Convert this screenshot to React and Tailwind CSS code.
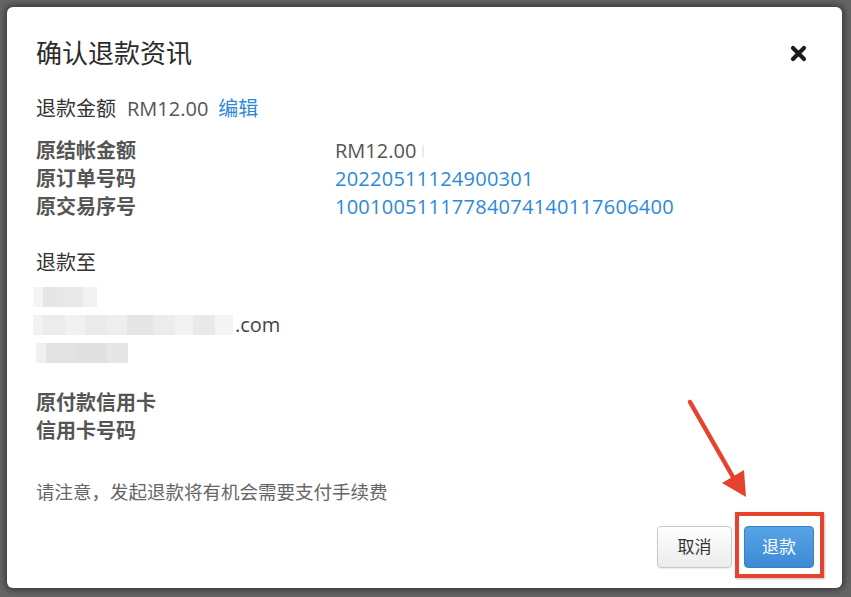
import React from "react";

const font = { fontFamily: '"Open Sans", "Noto Sans CJK SC", "Noto Sans", sans-serif' };

function Blur({ blocks, className = "" }) {
  return (
    <div className={"flex h-[20px] " + className}>
      {blocks.map(([w, c], i) => (
        <div key={i} style={{ width: w, background: c }} className="h-full" />
      ))}
    </div>
  );
}

export default function App() {
  return (
    <div
      className="relative w-[851px] h-[597px] overflow-hidden bg-[#646464] pt-[7px] pl-[7px]"
      style={font}
    >
      <div className="relative w-[835px] h-[581px] bg-white rounded-[6px] shadow-[0_0_6px_2px_rgba(0,0,0,0.45)] pl-[29px] pr-[36px] pt-[28px] flex flex-col">
        {/* Title */}
        <div className="flex items-center justify-between h-[36px]">
          <div className="text-[26px] leading-[36px] text-[#2b2b2b]">确认退款资讯</div>
          <svg width="17" height="17" viewBox="0 0 17 17" className="mr-[-1px]">
            <path d="M3 3 L14 14 M14 3 L3 14" stroke="#1c1c1c" strokeWidth="4.2" strokeLinecap="round" />
          </svg>
        </div>

        {/* Refund amount */}
        <div className="mt-[24px] flex items-center h-[28px] text-[20px] leading-[28px]">
          <span className="text-[#333]">退款金额</span>
          <span className="ml-[11px] text-[#555]">RM12.00</span>
          <span className="ml-[10px] text-[#2d89d9]">编辑</span>
        </div>

        {/* Details table */}
        <div className="mt-[14px] flex flex-col text-[20px] leading-[28px]">
          <div className="flex h-[28px]">
            <span className="w-[299px] text-[#555] font-semibold">原结帐金额</span>
            <span className="text-[#555] flex items-center">
              RM12.00
              <span className="ml-[6px] inline-block w-[2px] h-[12px] bg-[#ececec]" />
            </span>
          </div>
          <div className="flex h-[28px]">
            <span className="w-[299px] text-[#555] font-semibold">原订单号码</span>
            <span className="text-[#2d89d9] tracking-[0.25px]">20220511124900301</span>
          </div>
          <div className="flex h-[28px]">
            <span className="w-[299px] text-[#555] font-semibold">原交易序号</span>
            <span className="text-[#2d89d9] tracking-[0.25px]">10010051117784074140117606400</span>
          </div>
        </div>

        {/* Refund to */}
        <div className="mt-[28px] h-[28px] text-[20px] leading-[28px] text-[#333]">退款至</div>
        <div className="mt-[6px] flex flex-col">
          <div className="h-[28px] flex items-center ml-[-3px]">
            <Blur
              blocks={[
                [10, "#f4f4f4"],
                [20, "#e6e6e6"],
                [20, "#e9e9e9"],
                [14, "#f3f3f3"],
              ]}
            />
          </div>
          <div className="h-[28px] flex items-center ml-[-3px] text-[20px] leading-[28px] text-[#444]">
            <Blur
              className="h-[18px]"
              blocks={[
                [10, "#f2f2f2"],
                [22, "#ececec"],
                [20, "#f1f1f1"],
                [22, "#ebebeb"],
                [20, "#eeeeee"],
                [26, "#e5e5e5"],
                [22, "#ececec"],
                [18, "#f2f2f2"],
                [22, "#e9e9e9"],
                [18, "#f4f4f4"],
              ]}
            />
            <span className="ml-[2px]">.com</span>
          </div>
          <div className="h-[28px] flex items-center">
            <Blur
              className="h-[18px]"
              blocks={[
                [10, "#f0f0f0"],
                [30, "#e3e3e3"],
                [30, "#e0e0e0"],
                [22, "#e6e6e6"],
              ]}
            />
          </div>
        </div>

        {/* Credit card */}
        <div className="mt-[22px] flex flex-col text-[20px] leading-[28px] text-[#555] font-semibold">
          <div className="h-[28px]">原付款信用卡</div>
          <div className="h-[28px]">信用卡号码</div>
        </div>

        {/* Note */}
        <div className="mt-[34px] h-[26px] text-[18.5px] leading-[26px] text-[#666]">
          请注意，发起退款将有机会需要支付手续费
        </div>

        {/* Buttons */}
        <div className="mt-[21px] flex justify-end mr-[-8px] gap-[12px]">
          <button className="w-[75px] h-[42px] rounded-[4px] border border-[#c8c8c8] bg-gradient-to-b from-white to-[#ececec] text-[17px] text-[#333] shadow-[0_1px_1px_rgba(0,0,0,0.08)]">
            取消
          </button>
          <div className="relative">
            <button className="w-[70px] h-[42px] rounded-[4px] border border-[#3b7fc4] bg-gradient-to-b from-[#56a3e6] to-[#3d8bd6] text-[17px] text-white">
              退款
            </button>
            <div className="absolute left-[-9px] top-[-14px] w-[89px] h-[66px] border-[4px] border-[#e5432d] shadow-[1px_1px_2px_rgba(0,0,0,0.25)]" />
          </div>
        </div>
      </div>

      {/* Red annotation arrow */}
      <svg className="absolute left-0 top-0" width="851" height="597" viewBox="0 0 851 597">
        <line x1="690" y1="402" x2="733" y2="477" stroke="#e5432d" strokeWidth="4.5" strokeLinecap="round" />
        <polygon points="746,497 722,483 744,470" fill="#e5432d" />
      </svg>
    </div>
  );
}
